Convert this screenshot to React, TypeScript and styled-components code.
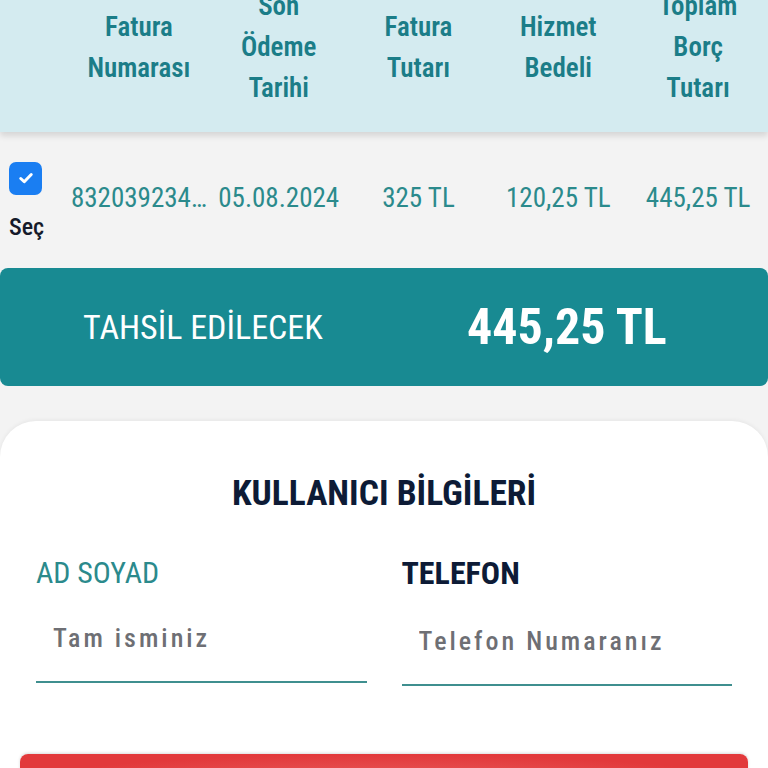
import React from "react";
import styled, { createGlobalStyle, css } from "styled-components";

const GlobalStyle = createGlobalStyle`
  html, body { margin: 0; padding: 0; }
  body {
    background: #f3f3f3;
    font-family: Roboto, "Noto Sans", "Liberation Sans", sans-serif;
    overflow: hidden;
  }
`;

const condensed = css`
  font-stretch: 75%;
`;

const Page = styled.div`
  width: 768px;
  height: 768px;
  overflow: hidden;
  display: flex;
  flex-direction: column;
  & > * {
    flex-shrink: 0;
  }
`;

const TableHead = styled.div`
  display: grid;
  grid-template-columns: 69px repeat(5, 1fr);
  align-items: center;
  margin-top: -37px;
  height: 169px;
  background: #d4ebf0;
  box-shadow: 0 4px 6px rgba(0, 0, 0, 0.12);
  position: relative;
  z-index: 1;
`;

const HeadCell = styled.div`
  ${condensed};
  text-align: center;
  color: #1b7d88;
  font-size: 27px;
  font-weight: 600;
  line-height: 41px;
`;

const DataRow = styled.div`
  display: grid;
  grid-template-columns: 69px repeat(5, 1fr);
  align-items: center;
  height: 136px;
`;

const SelectCell = styled.div`
  display: flex;
  flex-direction: column;
  align-items: flex-start;
  padding-left: 9px;
  gap: 20px;
`;

const CheckBox = styled.div`
  width: 33px;
  height: 33px;
  border-radius: 7px;
  background: #1a7ef2;
  display: flex;
  align-items: center;
  justify-content: center;
`;

const SelectLabel = styled.div`
  ${condensed};
  font-size: 24px;
  font-weight: 500;
  color: #151a2a;
  line-height: 24px;
`;

const DataCell = styled.div`
  ${condensed};
  text-align: center;
  color: #2b8a8c;
  font-size: 27px;
  font-weight: 400;
  white-space: nowrap;
  overflow: hidden;
  text-overflow: ellipsis;
  padding-bottom: 4px;
`;

const TotalBanner = styled.div`
  height: 118px;
  background: #188a92;
  border-radius: 8px;
  display: grid;
  grid-template-columns: 1fr 1fr;
  align-items: center;
  color: #ffffff;
`;

const TotalLabel = styled.div`
  ${condensed};
  padding-left: 83px;
  font-size: 34px;
  font-weight: 400;
`;

const TotalValue = styled.div`
  ${condensed};
  padding-left: 83px;
  font-size: 50px;
  font-weight: 700;
`;

const Card = styled.div`
  margin-top: 35px;
  background: #ffffff;
  border-radius: 36px 36px 0 0;
  box-shadow: 0 -1px 4px rgba(0, 0, 0, 0.06);
  display: flex;
  flex-direction: column;
  padding: 0 20px 40px;
`;

const CardTitle = styled.h2`
  ${condensed};
  margin: 50px 0 0;
  text-align: center;
  color: #0d1b36;
  font-size: 35.5px;
  font-weight: 700;
  line-height: 44px;
`;

const FormGrid = styled.div`
  display: grid;
  grid-template-columns: 1fr 1fr;
  column-gap: 35px;
  padding: 0 16px;
  margin-top: 40px;
`;

const Field = styled.div`
  display: flex;
  flex-direction: column;
`;

const FieldLabel = styled.div<{ $strong?: boolean }>`
  ${condensed};
  font-size: ${(p) => (p.$strong ? 32 : 30)}px;
  font-weight: ${(p) => (p.$strong ? 700 : 400)};
  color: ${(p) => (p.$strong ? "#0d1b36" : "#2b8a8c")};
  line-height: 36px;
`;

const Input = styled.input<{ $offset?: number }>`
  ${condensed};
  margin-top: ${(p) => 28 + (p.$offset ?? 0)}px;
  height: 64px;
  border: none;
  border-bottom: 2px solid #3f8f8f;
  background: transparent;
  padding: 0 17px 24px;
  font-family: inherit;
  font-size: 26px;
  font-weight: 500;
  letter-spacing: 3px;
  outline: none;
  color: #333;
  width: 100%;
  box-sizing: border-box;
  &::placeholder {
    color: #6e6f74;
  }
`;

const SubmitButton = styled.button`
  margin-top: 68px;
  height: 60px;
  border: none;
  border-radius: 8px;
  background: radial-gradient(ellipse at center, #e95f5f 0%, #e2393b 70%);
  box-shadow: 0 -1px 3px rgba(0, 0, 0, 0.15);
`;

const CheckIcon = () => (
  <svg width="20" height="20" viewBox="0 0 16 16" fill="none">
    <path d="M3.8 8.4 L6.6 11 L12.2 5.2" stroke="#fff" strokeWidth="2.4" strokeLinecap="round" strokeLinejoin="round" />
  </svg>
);

export default function App() {
  const headers = [
    ["Fatura", "Numarası"],
    ["Son", "Ödeme", "Tarihi"],
    ["Fatura", "Tutarı"],
    ["Hizmet", "Bedeli"],
    ["Toplam", "Borç", "Tutarı"],
  ];
  const values = ["832039234…", "05.08.2024", "325 TL", "120,25 TL", "445,25 TL"];
  return (
    <>
      <GlobalStyle />
      <Page>
        <TableHead>
          <div />
          {headers.map((lines, i) => (
            <HeadCell key={i}>
              {lines.map((l, j) => (
                <div key={j}>{l}</div>
              ))}
            </HeadCell>
          ))}
        </TableHead>
        <DataRow>
          <SelectCell>
            <CheckBox>
              <CheckIcon />
            </CheckBox>
            <SelectLabel>Seç</SelectLabel>
          </SelectCell>
          {values.map((v, i) => (
            <DataCell key={i}>{v}</DataCell>
          ))}
        </DataRow>
        <TotalBanner>
          <TotalLabel>TAHSİL EDİLECEK</TotalLabel>
          <TotalValue>445,25 TL</TotalValue>
        </TotalBanner>
        <Card>
          <CardTitle>KULLANICI BİLGİLERİ</CardTitle>
          <FormGrid>
            <Field>
              <FieldLabel>AD SOYAD</FieldLabel>
              <Input placeholder="Tam isminiz" />
            </Field>
            <Field>
              <FieldLabel $strong>TELEFON</FieldLabel>
              <Input placeholder="Telefon Numaranız" $offset={3} />
            </Field>
          </FormGrid>
          <SubmitButton />
        </Card>
      </Page>
    </>
  );
}
